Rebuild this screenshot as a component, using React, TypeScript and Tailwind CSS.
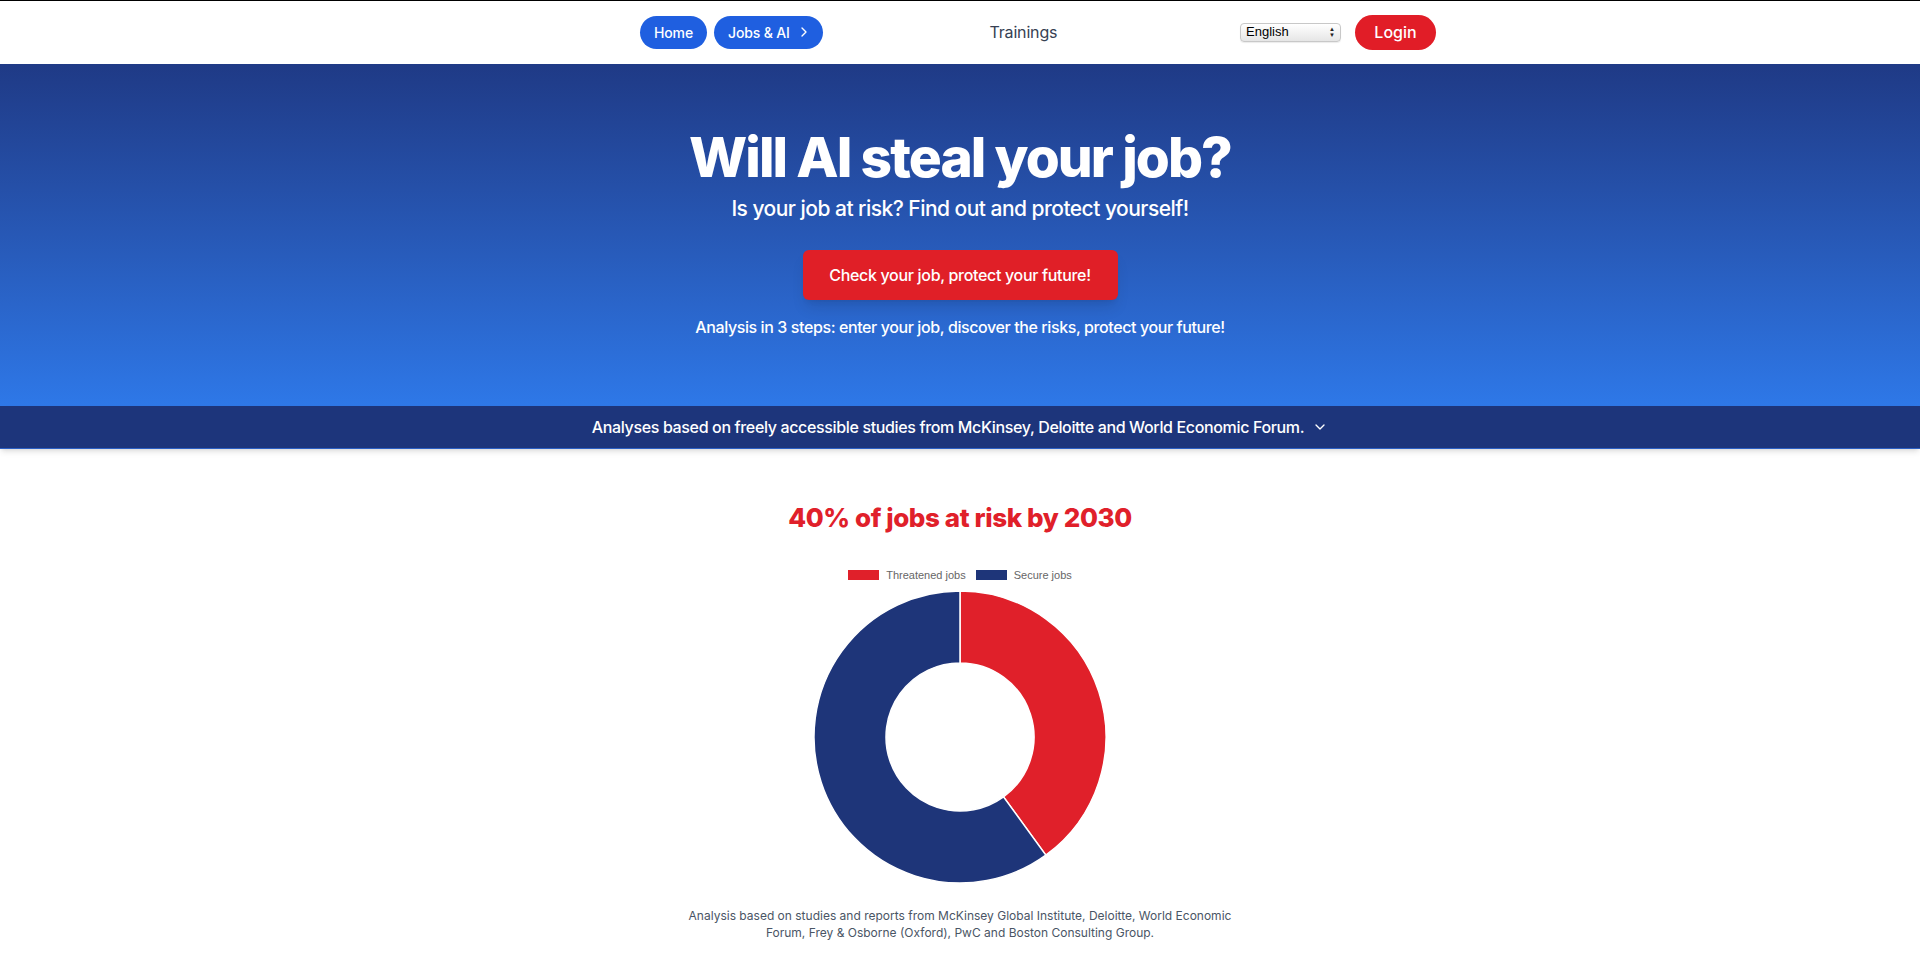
import { ChevronDown, ChevronRight } from 'lucide-react';

const Donut = () => (
  <svg width="300" height="300" viewBox="0 0 300 300" aria-hidden="true">
    <path
      d="M150 4 A146 146 0 0 1 235.82 268.11 L193.5 209.87 A74 74 0 0 0 150 76 Z"
      fill="#e0202a"
      stroke="#fff"
      strokeWidth="1.5"
    />
    <path
      d="M235.82 268.11 A146 146 0 1 1 150 4 L150 76 A74 74 0 1 0 193.5 209.87 Z"
      fill="#1e3579"
      stroke="#fff"
      strokeWidth="1.5"
    />
  </svg>
);

const App = () => {
  return (
    <div className="min-h-screen bg-white font-['Inter',sans-serif] text-gray-800">
      <header className="h-16 border-t border-black bg-white pb-[1px]">
        <nav className="ml-[640px] flex h-full w-[796px] items-center justify-between">
          <div className="flex items-center gap-[7px]">
            <a className="flex h-[33px] items-center rounded-full bg-[#1f5fe0] px-[14px] text-[14px] font-medium tracking-[-0.01em] text-white">
              Home
            </a>
            <a className="flex h-[33px] items-center gap-[6px] rounded-full bg-[#1f5fe0] pl-[14px] pr-[11px] text-[14px] font-medium tracking-[-0.01em] text-white">
              Jobs &amp; AI
              <ChevronRight size={16} strokeWidth={2} />
            </a>
          </div>
          <a className="mr-[16px] text-[16px] tracking-[-0.01em] text-gray-700">Trainings</a>
          <div className="flex items-center gap-[14px]">
            <div className="relative flex h-[19px] w-[101px] items-center rounded-[4px] border border-[#c8c8c8] bg-gradient-to-b from-white to-[#e6e6e6] pl-[5px] font-['Liberation_Sans',sans-serif] text-[13px] text-black shadow-[0_1px_1px_rgba(0,0,0,0.08)]">
              English
              <span className="absolute right-[5px] top-[2px] flex flex-col text-[6px] leading-[6px] text-[#222]">
                <span>▲</span>
                <span>▼</span>
              </span>
            </div>
            <button className="flex h-[35px] w-[81px] items-center justify-center rounded-full bg-[#e11d27] text-[16px] font-medium text-white">
              Login
            </button>
          </div>
        </nav>
      </header>

      <section className="bg-gradient-to-b from-[#1f3a86] to-[#2e78e8] pb-[67px] pt-[61px] text-center text-white">
        <h1 className="text-[55px] font-extrabold leading-[64px] tracking-[-0.035em]">Will AI steal your job?</h1>
        <p className="mt-1 text-[21px] font-medium leading-[32px] tracking-[-0.025em]">
          Is your job at risk? Find out and protect yourself!
        </p>
        <button className="mx-auto mt-[25px] flex h-[50px] w-[315px] items-center justify-center rounded-md bg-[#e01f27] text-[16px] font-medium tracking-[-0.02em] shadow-lg">
          Check your job, protect your future!
        </button>
        <p className="mt-[15px] text-[16px] font-medium leading-[24px] tracking-[-0.025em]">
          Analysis in 3 steps: enter your job, discover the risks, protect your future!
        </p>
      </section>

      <div className="flex h-[43px] items-center justify-center gap-[8px] border-b border-[#2b5fc4] bg-[#1d357b] text-[16px] font-medium tracking-[-0.022em] text-white shadow-md">
        Analyses based on freely accessible studies from McKinsey, Deloitte and World Economic Forum.
        <ChevronDown size={16} strokeWidth={2} />
      </div>

      <main className="flex flex-col items-center pt-[51px]">
        <h2 className="text-[26px] font-extrabold leading-[36px] tracking-[-0.015em] text-[#e0202a]">
          40% of jobs at risk by 2030
        </h2>
        <div className="mt-[33px] flex items-center gap-[10px] font-['Liberation_Sans',sans-serif] text-[11px] leading-[12px] text-[#666]">
          <span className="flex items-center gap-[7px]">
            <span className="h-[10px] w-[31px] bg-[#e0202a]" />
            Threatened jobs
          </span>
          <span className="flex items-center gap-[7px]">
            <span className="h-[10px] w-[31px] bg-[#1e3579]" />
            Secure jobs
          </span>
        </div>
        <div className="mt-[6px]">
          <Donut />
        </div>
        <p className="mt-[20px] w-[560px] text-center text-[12px] leading-[17px] text-gray-600">
          Analysis based on studies and reports from McKinsey Global Institute, Deloitte, World Economic Forum, Frey &amp; Osborne (Oxford), PwC and Boston Consulting Group.
        </p>
      </main>
    </div>
  );
};

export default App;
